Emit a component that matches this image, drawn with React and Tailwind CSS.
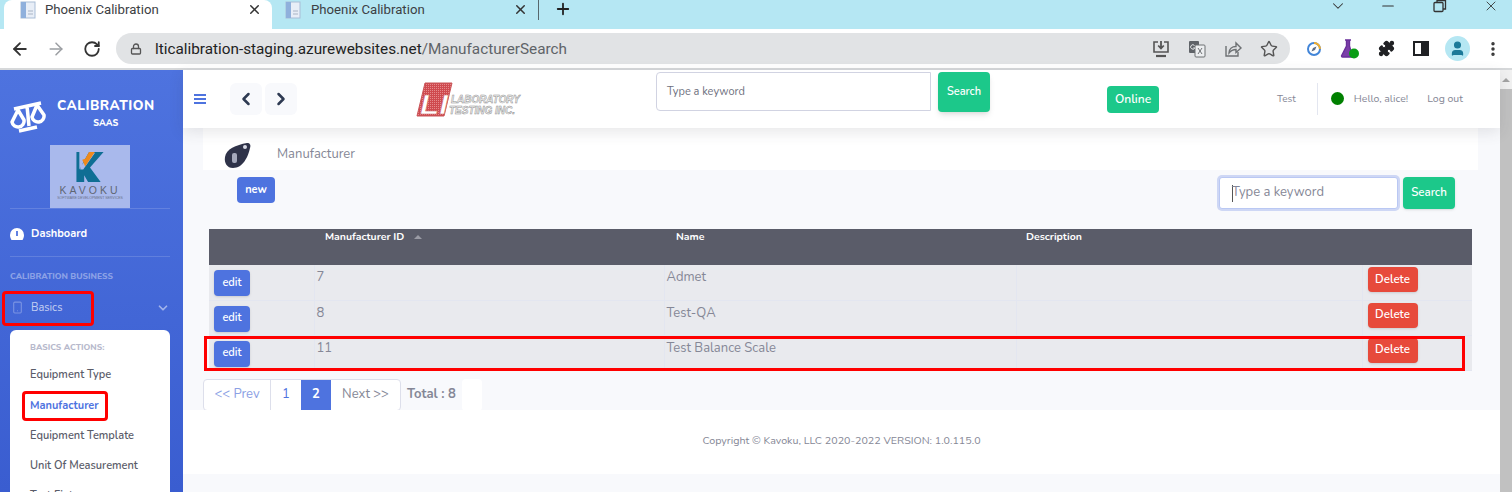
import { ArrowLeft, ArrowRight, RotateCw, Lock, X, Plus, ChevronDown, Minus, Star, Puzzle, ChevronLeft, ChevronRight, Smartphone, User, EllipsisVertical } from "lucide-react";

const FONT = "font-['Nunito','Open_Sans','Noto_Sans',sans-serif]";

function BrowserTab({ active }) {
  return (
    <div className={`flex h-[29px] items-start pr-[10px] ${active ? "ml-[4px] w-[268px] rounded-t-lg bg-white pl-[16px]" : "w-[266px] pl-[13px]"}`}>
      <div className="flex h-[19px] w-full items-center">
        <svg width="17" height="18" viewBox="0 0 17 18" className="shrink-0">
          <rect x="1" y="1" width="14" height="16" fill="#e8eef7" stroke="#a9bdd6" />
          <rect x="1" y="1" width="5" height="16" fill="#8fb0dc" />
          <path d="M8 10h5M8 13h5" stroke="#a9b4c4" />
        </svg>
        <span className={`flex-1 truncate text-[13.200px] text-[#3c4043] ${active ? "ml-[8px]" : "ml-[9px]"}`}>Phoenix Calibration</span>
        <X size={15} strokeWidth={2.4} className="text-[#333]" />
      </div>
    </div>
  );
}

function BrowserBar() {
  return (
    <div className="shrink-0 font-['Roboto',sans-serif]">
      <div className="flex h-[29px] items-start bg-[#b5e7f3]">
        <BrowserTab active />
        <BrowserTab />
        <div className="h-[20px] w-px bg-[#56676c]" />
        <Plus size={18} strokeWidth={2.4} className="ml-[15px] text-[#222]" />
        <div className="ml-auto flex -translate-y-[3px] items-center pr-[13px] text-[#333]">
          <ChevronDown size={18} strokeWidth={1.4} />
          <Minus size={18} strokeWidth={1.6} className="ml-[32px]" />
          <svg className="ml-[36px]" width="14" height="14" viewBox="0 0 14 14" fill="none" stroke="#333" strokeWidth="1.300">
            <rect x="1" y="3.500" width="9" height="9" rx="1" />
            <path d="M4 3.500V1.500h8.500V10H10" />
          </svg>
          <X size={16} strokeWidth={1.3} className="ml-[36px]" />
        </div>
      </div>
      <div className="flex h-[41px] items-center border-b-2 border-[#d6d8da] bg-white">
        <ArrowLeft size={20} strokeWidth={2.2} className="ml-[10px] text-[#333]" />
        <ArrowRight size={20} strokeWidth={1.8} className="ml-[16px] text-[#9b9ea2]" />
        <RotateCw size={18} strokeWidth={2.4} className="ml-[17px] text-[#333]" />
        <div className="ml-[15px] flex h-[31px] w-[1174px] items-center rounded-full bg-[#e1e3e5] pl-[14px]">
          <Lock size={12} strokeWidth={2.6} className="text-[#555]" />
          <span className="ml-[13px] pt-px text-[15.300px]">
            <span className="text-[#222]">lticalibration-staging.azurewebsites.net</span>
            <span className="text-[#5f6368]">/ManufacturerSearch</span>
          </span>
          <div className="ml-auto flex items-center gap-[18px] pr-[12px]">
            <svg width="18" height="18" viewBox="0 0 18 18" fill="none" stroke="#555" strokeWidth="1.600">
              <path d="M6 2H2v10h14V2h-4" />
              <path d="M9 1v7M6.200 5.500 9 8.500l2.800-3" strokeWidth="1.800" />
              <path d="M4 16h10" strokeWidth="2.200" />
            </svg>
            <svg width="18" height="18" viewBox="0 0 18 18">
              <rect x="1" y="1" width="10" height="12" rx="1" fill="#5f6368" />
              <rect x="7" y="5" width="10" height="12" rx="1" fill="#eceef0" stroke="#6d7073" />
              <path d="M6.500 5.500a2.200 2.200 0 1 0 .3 2.500H5.200" fill="none" stroke="#eceef0" strokeWidth="1" />
              <path d="m10 8 4 6M14 8l-4 6" stroke="#6d7073" />
            </svg>
            <svg width="18" height="18" viewBox="0 0 18 18" fill="none" stroke="#6d7073" strokeWidth="1.400">
              <path d="M2 6v10h12v-4" />
              <path d="M5 13c0-4 3-6.500 7-6.500V3l5 5-5 4.500V9.500c-3 0-5 1-7 3.500z" />
            </svg>
            <Star size={18} strokeWidth={1.9} className="text-[#555]" />
          </div>
        </div>
        <div className="flex items-center">
          <svg className="ml-[16px]" width="16" height="16" viewBox="0 0 16 16" fill="none">
            <circle cx="8" cy="8" r="6" stroke="#4285d8" strokeWidth="2" />
            <path d="M8 2a6 6 0 0 1 6 6" stroke="#f0ad2e" strokeWidth="2" />
            <path d="M10.500 5.500 9 9 5.500 10.500 7 7z" fill="#5a6b85" />
          </svg>
          <svg className="ml-[18px]" width="20" height="20" viewBox="0 0 20 20">
            <path d="M5 1h6M6.500 1v6L1.500 17a1 1 0 0 0 1 1h10L9.500 7V1" fill="#7b3fa8" stroke="#6a2f9a" strokeWidth="1.400" />
            <circle cx="14" cy="14.500" r="5" fill="#0a9d16" />
          </svg>
          <Puzzle size={17} fill="#202124" strokeWidth={1.6} className="ml-[18px] text-[#202124]" />
          <div className="ml-[18px] flex h-[15px] w-[16px] justify-end border-[2.500px] border-[#202124]">
            <div className="w-[6px] bg-[#202124]" />
          </div>
          <div className="ml-[16px] flex h-[25px] w-[25px] items-center justify-center rounded-full bg-[#b5e7f3]">
            <User size={17} fill="#1c7a99" strokeWidth={2} className="text-[#1c7a99]" />
          </div>
          <EllipsisVertical size={18} strokeWidth={2.6} className="ml-[14px] text-[#333]" />
        </div>
      </div>
    </div>
  );
}

function ScaleLogo() {
  return (
    <svg className="mt-[4px] shrink-0" width="36" height="33" viewBox="0 0 36 33" fill="none" stroke="#fff" strokeWidth="3.500" strokeLinejoin="round">
      <path d="M4 9 31 3M17 6l2 20M9 31l18-4" />
      <path d="M8 10 2 22a6 6 0 0 0 12-2zM27 5l-5 12a6 6 0 0 0 12-2z" />
    </svg>
  );
}

function KavokuLogo() {
  return (
    <div className="flex h-[63px] w-[80px] flex-col items-center bg-[#a9b9ec] pt-[6px]">
      <svg width="28" height="31" viewBox="0 0 28 32" className="shrink-0">
        <path d="M0 1h3v18L13 1h15L14 17l11 15H12L8 25v7H0z" fill="#0f6e94" />
        <path d="M4 3h2v11L15 2h4L7 19H4z" fill="#a9b9ec" />
        <path d="M6 9l3 7L19 1h-6L9 8z" fill="#ee8a1d" />
      </svg>
      <span className="mt-[3px] font-['Liberation_Sans',sans-serif] text-[10.500px] leading-none tracking-[3px] text-[#5f6673]">KAVOKU</span>
      <span className="mt-[1px] whitespace-nowrap font-['Liberation_Sans',sans-serif] text-[3.500px] leading-none text-[#6b7389]">SOFTWARE DEVELOPMENT SERVICES</span>
    </div>
  );
}

function Sidebar() {
  return (
    <aside className="flex h-full w-[183px] shrink-0 flex-col overflow-hidden bg-gradient-to-b from-[#4e73df] to-[#3a5dd0] pl-[10px] pr-[13px]">
      <div className="flex h-[75px] shrink-0 items-start pt-[26px]">
        <ScaleLogo />
        <div className="ml-[11px] flex flex-col items-center font-extrabold text-white">
          <span className="text-[13.500px] leading-[20px] tracking-[0.500px]">CALIBRATION</span>
          <span className="text-[9px] leading-[14px]">SAAS</span>
        </div>
      </div>
      <div className="flex shrink-0 justify-center">
        <KavokuLogo />
      </div>
      <div className="h-px shrink-0 bg-white/15" />
      <div className="flex h-[47px] shrink-0 items-center gap-[7px] pt-[3px] text-[11px] font-bold text-white">
        <svg width="14" height="12" viewBox="0 0 14 12">
          <path d="M7 0a7 7 0 0 0-7 7c0 2 .7 3.600 1.500 5h11C13.300 10.600 14 9 14 7a7 7 0 0 0-7-7z" fill="#fff" />
          <path d="M7 3v5" stroke="#4e73df" strokeWidth="1.800" />
        </svg>
        Dashboard
      </div>
      <div className="h-px shrink-0 bg-white/15" />
      <div className="mt-[13px] shrink-0 text-[8.500px] font-extrabold text-white/40">CALIBRATION BUSINESS</div>
      <div className="mt-[9px] flex h-[32px] shrink-0 items-center text-[11px] text-white/70">
        <Smartphone size={13} strokeWidth={2} className="ml-px mr-[7px] text-white/30" />
        Basics
        <ChevronDown size={14} strokeWidth={3} className="ml-auto text-white/50" />
      </div>
      <div className="mt-[6px] flex shrink-0 flex-col rounded-t-md bg-white px-[20px] pt-[11px] text-[11px] font-semibold text-[#5a5c69]">
        <div className="mb-[6px] text-[8.500px] font-extrabold text-[#b7b9cc]">BASICS ACTIONS:</div>
        <div className="h-[30px] leading-[30px]">Equipment Type</div>
        <div className="h-[31px] font-bold leading-[31px] text-[#4e73df]">Manufacturer</div>
        <div className="h-[30px] leading-[30px]">Equipment Template</div>
        <div className="h-[30px] leading-[30px]">Unit Of Measurement</div>
        <div className="h-[30px] leading-[30px]">Test Fixture</div>
      </div>
    </aside>
  );
}

function TopBar() {
  return (
    <header className="relative z-10 flex h-[58px] shrink-0 items-center bg-white pl-[11px] shadow-[0_4px_14px_rgba(58,59,69,0.12)]">
      <svg width="13" height="12" viewBox="0 0 13 12" stroke="#4e73df" strokeWidth="2">
        <path d="M0 2h12M0 6h12M0 10h12" />
      </svg>
      <div className="ml-[23px] flex gap-[3px]">
        <div className="flex h-[32px] w-[32px] items-center justify-center rounded-md bg-[#f8f9fc]"><ChevronLeft size={20} strokeWidth={3} className="text-[#2e3a52]" /></div>
        <div className="flex h-[32px] w-[32px] items-center justify-center rounded-md bg-[#f8f9fc]"><ChevronRight size={20} strokeWidth={3} className="text-[#2e3a52]" /></div>
      </div>
      <svg className="ml-[119px] mt-[4px]" width="106" height="42" viewBox="0 0 106 42">
        <defs>
          <pattern id="hatch" width="2" height="2" patternUnits="userSpaceOnUse">
            <rect width="2" height="2" fill="#cf4a4f" />
            <rect width="1" height="1" fill="#e58a8c" />
          </pattern>
        </defs>
        <path d="M9 3h27l-8 33H1z" fill="url(#hatch)" stroke="#c9565a" />
        <text x="4" y="34" fontFamily="Liberation Sans" fontWeight="700" fontStyle="italic" fontSize="27" fill="#fff" stroke="#c9565a" strokeWidth="0.600" textLength="28" lengthAdjust="spacingAndGlyphs">LI</text>
        <text x="35" y="23" fontFamily="Liberation Sans" fontWeight="700" fontStyle="italic" fontSize="10" fill="#f4f4f4" stroke="#8f8f8f" strokeWidth="0.500" textLength="69" lengthAdjust="spacingAndGlyphs">LABORATORY</text>
        <text x="33" y="34" fontFamily="Liberation Sans" fontWeight="700" fontStyle="italic" fontSize="10" fill="#f4f4f4" stroke="#8f8f8f" strokeWidth="0.500" textLength="66" lengthAdjust="spacingAndGlyphs">TESTING INC.</text>
      </svg>
      <div className="mb-[15px] ml-[134px] flex h-[39px] w-[275px] items-center rounded-l border border-[#d1d3e2] bg-white pl-[10px] pt-px text-[11px] text-[#6e707e]">Type a keyword</div>
      <div className="mb-[15px] ml-[7px] flex h-[40px] w-[52px] items-center justify-center rounded-sm bg-[#1cc88a] pt-px text-[11px] font-semibold text-white shadow-md">Search</div>
      <div className="ml-[117px] flex h-[27px] w-[52px] items-center justify-center rounded-sm bg-[#1cc88a] text-[12px] font-semibold text-white">Online</div>
      <span className="ml-[118px] text-[10px] text-[#858796]">Test</span>
      <div className="ml-[21px] h-[32px] w-px bg-[#e3e6f0]" />
      <div className="mb-[2px] ml-[13px] h-[13px] w-[13px] rounded-full bg-[#008000]" />
      <span className="ml-[10px] text-[10.500px] text-[#858796]">Hello, alice!</span>
      <span className="ml-[19px] text-[10.500px] text-[#858796]">Log out</span>
    </header>
  );
}

function Row({ id, name }) {
  return (
    <tr className="h-[35px] border-b border-[#e3e6f0] bg-[#e9eaee] align-top text-[13px] text-[#858796]">
      <td className="border-r border-[#e3e6f0] pl-[5px] pt-[5px]">
        <div className="flex h-[26px] w-[36px] items-center justify-center rounded-sm bg-[#4e73df] text-[11px] font-semibold text-white shadow">edit</div>
      </td>
      <td className="border-r border-[#e3e6f0] pl-[2px] pt-[2px] leading-[20px]">{id}</td>
      <td className="border-r border-[#e3e6f0] pl-[2px] pt-[2px] leading-[20px]">{name}</td>
      <td className="border-r border-[#e3e6f0]" />
      <td className="pl-[5px] pt-[2px]">
        <div className="flex h-[25px] w-[50px] items-center justify-center rounded-sm bg-[#e74a3b] text-[11.500px] font-semibold text-white shadow">Delete</div>
      </td>
    </tr>
  );
}

function Content() {
  return (
    <div className="flex min-h-0 flex-1 flex-col">
      <div className="ml-[20px] mr-[22px] flex h-[42px] shrink-0 items-center bg-white pl-[20px] pt-[12px] text-[13px] text-[#858796]">
        <svg width="28" height="27" viewBox="0 0 28 27">
          <path d="M2 15C3 7 13 3 24 1c3 0 4 2 3 5-2 9-7 20-17 20C4 26 1 21 2 15z" fill="#2f3349" />
          <circle cx="22" cy="5" r="2" fill="#d8dbe6" />
          <rect x="9" y="11" width="5" height="10" rx="2" fill="#a5a9bb" />
        </svg>
        <span className="ml-[26px]">Manufacturer</span>
      </div>
      <div className="flex min-h-0 flex-1 flex-col bg-[#f8f9fc]">
        <div className="flex h-[59px] shrink-0 items-start justify-between pl-[54px] pr-[45px]">
          <div className="mt-[7px] flex h-[26px] w-[38px] items-center justify-center rounded-sm bg-[#4e73df] text-[11px] font-bold text-white">new</div>
          <div className="flex items-center gap-[5px] pt-[7px]">
            <div className="flex h-[32px] w-[179px] items-center rounded-[3px] border border-[#bac8f3] bg-white pl-[12px] text-[13px] text-[#858796] shadow-[0_0_0_2px_rgba(78,115,223,0.25)]">
              <span className="mr-[-1px] h-[17px] w-px bg-[#555]" />
              Type a keyword
            </div>
            <div className="flex h-[32px] w-[52px] items-center justify-center rounded-sm bg-[#1cc88a] text-[11.500px] font-semibold text-white shadow">Search</div>
          </div>
        </div>
        <table className="ml-[26px] w-[1263px] table-fixed border-collapse">
          <colgroup>
            <col className="w-[105px]" />
            <col className="w-[350px]" />
            <col className="w-[352px]" />
            <col className="w-[346px]" />
            <col className="w-[110px]" />
          </colgroup>
          <thead>
            <tr className="h-[36px] bg-[#5a5c69] align-top text-left text-[10.500px] font-bold text-white">
              <th />
              <th className="pl-[11px]">
                Manufacturer ID
                <span className="ml-[10px] inline-block border-x-[4px] border-b-[4px] border-x-transparent border-b-[#9a9ba5] align-middle" />
              </th>
              <th className="pl-[12px]">Name</th>
              <th className="pl-[10px]">Description</th>
              <th />
            </tr>
          </thead>
          <tbody>
            <Row id="7" name="Admet" />
            <Row id="8" name="Test-QA" />
            <Row id="11" name="Test Balance Scale" />
          </tbody>
        </table>
        <div className="ml-[20px] mt-[8px] flex h-[32px] shrink-0 items-stretch text-[13px]">
          <div className="flex overflow-hidden rounded border border-[#dddfeb] bg-white">
            <span className="flex w-[67px] items-center justify-center border-r border-[#dddfeb] text-[#8ba0e4]">&lt;&lt; Prev</span>
            <span className="flex w-[30px] items-center justify-center text-[#4e73df]">1</span>
            <span className="flex w-[30px] items-center justify-center bg-[#4e73df] font-bold text-white">2</span>
            <span className="flex w-[69px] items-center justify-center text-[#858796]">Next &gt;&gt;</span>
          </div>
          <span className="ml-[6px] flex items-center text-[13px] font-bold text-[#858796]">Total : 8</span>
          <span className="ml-[6px] w-[20px] rounded bg-white" />
        </div>
        <footer className="-mt-px flex h-[64px] shrink-0 items-center justify-center bg-white text-[10.700px] text-[#858796]">
          Copyright © Kavoku, LLC 2020-2022 VERSION: 1.0.115.0
        </footer>
      </div>
    </div>
  );
}

function Scrollbar() {
  return (
    <div className="flex w-[12px] shrink-0 flex-col bg-[#f1f1f1]">
      <div className="flex h-[19px] items-center justify-center">
        <span className="border-x-[4px] border-b-[4px] border-x-transparent border-b-[#a3a3a3]" />
      </div>
      <div className="flex-1 bg-[#c1c1c1]" />
    </div>
  );
}

export default function App() {
  return (
    <div className={`relative flex h-[492px] w-[1512px] flex-col overflow-hidden bg-white ${FONT}`}>
      <BrowserBar />
      <div className="flex min-h-0 flex-1">
        <Sidebar />
        <main className="flex min-w-0 flex-1 flex-col bg-[#f8f9fc]">
          <TopBar />
          <Content />
        </main>
        <Scrollbar />
      </div>
      {/* red annotation boxes from the original screenshot */}
      <div className="pointer-events-none absolute left-[2px] top-[291px] h-[35px] w-[92px] rounded-sm border-[3px] border-[#f00]" />
      <div className="pointer-events-none absolute left-[22px] top-[391px] h-[30px] w-[86px] rounded-sm border-[3px] border-[#f00]" />
      <div className="pointer-events-none absolute left-[204px] top-[336px] h-[35px] w-[1261px] border-[3px] border-[#f00]" />
    </div>
  );
}
